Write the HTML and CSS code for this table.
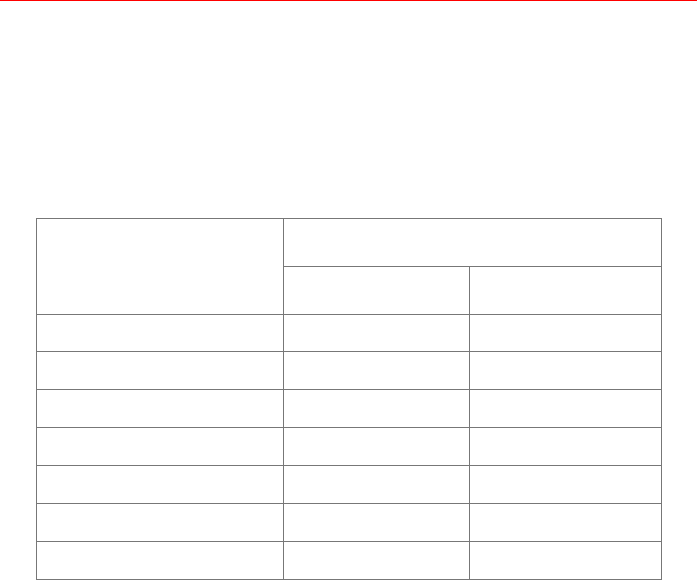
FILE: index.html
```html
<!DOCTYPE html>
<html>
<head>
<meta charset="utf-8">
<link rel="stylesheet" href="styles.css">
</head>
<body>
<div class="topbar"></div>
<main class="content">
<table class="grid">
<colgroup><col class="c1"><col class="c2"><col class="c3"></colgroup>
<thead>
<tr class="hrow"><th rowspan="2"></th><th colspan="2"></th></tr>
<tr class="hrow"><th></th><th></th></tr>
</thead>
<tbody>
<tr class="r37"><td></td><td></td><td></td></tr>
<tr class="r38"><td></td><td></td><td></td></tr>
<tr class="r38"><td></td><td></td><td></td></tr>
<tr class="r38"><td></td><td></td><td></td></tr>
<tr class="r38"><td></td><td></td><td></td></tr>
<tr class="r38"><td></td><td></td><td></td></tr>
<tr class="r38"><td></td><td></td><td></td></tr>
</tbody>
</table>
</main>
</body>
</html>
```
FILE: styles.css
```css
html, body {
  margin: 0;
  padding: 0;
  background: #ffffff;
  font-family: "Liberation Sans", Arial, sans-serif;
}
.topbar {
  height: 1px;
  background: #ff0000;
}
.content {
  padding: 217px 0 0 36px;
}
.grid {
  border-collapse: collapse;
  table-layout: fixed;
  width: 625px;
}
.c1 { width: 247px; }
.c2 { width: 186px; }
.c3 { width: 192px; }
.grid th, .grid td {
  border: 1px solid #777777;
  padding: 0;
}
.hrow { height: 48px; }
.r37 { height: 37px; }
.r38 { height: 38px; }
```
